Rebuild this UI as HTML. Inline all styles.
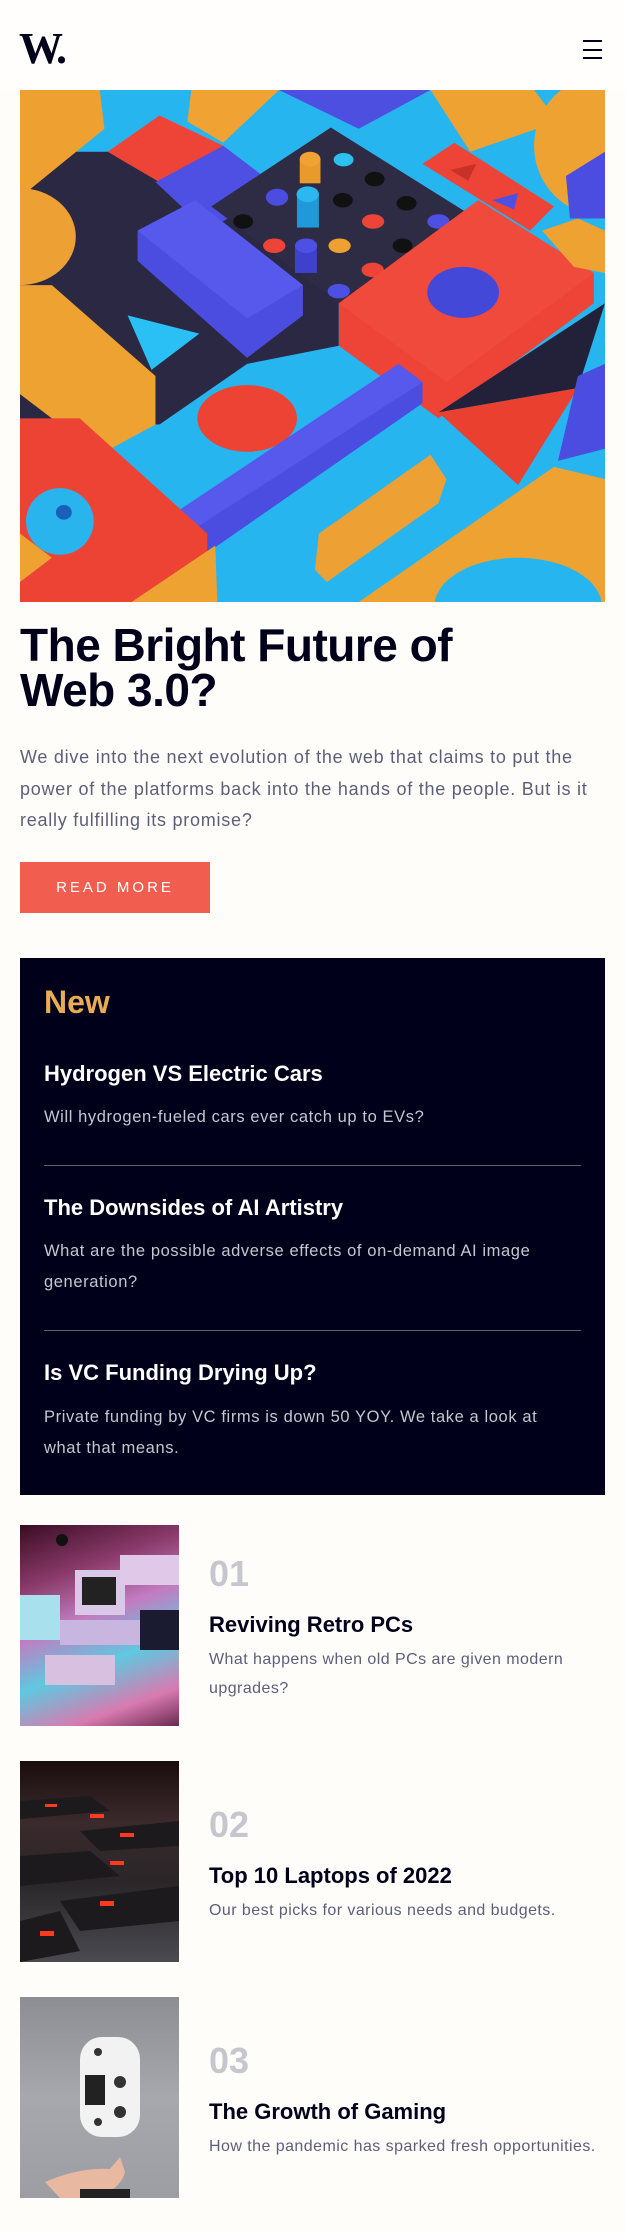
<!DOCTYPE html>
<html><head><meta charset="utf-8">
<style>
*{margin:0;padding:0;box-sizing:border-box}
html,body{width:625px;height:2233px;background:#fffdfa;overflow:hidden}
body{position:relative;font-family:"Liberation Sans",Arial,sans-serif}
.a{position:absolute;white-space:nowrap}
.hdr{position:absolute;left:0;top:0;width:625px;height:90px;background:#fffefc}
.logo{left:19px;top:27px;font-family:"Liberation Serif",serif;font-weight:bold;font-size:44px;line-height:44px;color:#00001a;letter-spacing:-3px}
.hb{position:absolute;left:583px;width:19px;height:2px;background:#00001a}
.title{left:20px;top:623px;font-size:46px;line-height:45px;font-weight:bold;color:#00001a;letter-spacing:-0.5px}
.para{left:20px;top:742px;font-size:18px;line-height:31.5px;color:#5d5f79;letter-spacing:0.75px}
.btn{position:absolute;left:20px;top:862px;width:190px;height:51px;background:#f15e50;color:#fff;font-size:15px;letter-spacing:3px;text-align:center;line-height:51px}
.panel{position:absolute;left:20px;top:958px;width:585px;height:537px;background:#00001a}
.new{left:44px;top:986px;font-size:32px;line-height:32px;font-weight:bold;color:#e9ab53}
.pt{left:44px;font-size:22px;line-height:26px;font-weight:bold;color:#fff}
.pd{left:44px;font-size:16.5px;line-height:31px;color:#c5c6ce;letter-spacing:0.6px}
.div{position:absolute;left:44px;width:537px;height:1px;background:#5d5f79}
.img{position:absolute;left:20px;width:159px;height:201px;overflow:hidden}
.num{left:209px;font-size:36px;line-height:36px;font-weight:bold;color:#c5c6ce}
.lt{left:209px;font-size:22px;line-height:26px;font-weight:bold;color:#00001a}
.ld{left:209px;font-size:16px;line-height:29px;color:#5d5f79;letter-spacing:0.45px}
</style></head><body>
<div class="hdr"></div>
<div class="a logo">W.</div>
<div class="hb" style="top:40px"></div>
<div class="hb" style="top:49px"></div>
<div class="hb" style="top:57px"></div>

<svg style="position:absolute;left:20px;top:90px" width="585" height="512" viewBox="50 148 1468 845" preserveAspectRatio="none">
<rect x="50" y="148" width="1468" height="845" fill="#27b5ef"/>
<polygon points="50,250 300,250 530,340 830,210 1170,350 850,500 850,570 620,600 400,700 50,700" fill="#2a2842"/>
<polygon points="50,148 250,148 262,212 60,320 50,320" fill="#eea030"/>
<polygon points="480,148 700,148 560,235 470,200" fill="#f0a233"/>
<polygon points="700,148 1080,148 900,212" fill="#4c4fe0"/>
<polygon points="270,250 400,190 560,240 400,300" fill="#ee4438"/>
<polygon points="390,300 560,240 700,310 520,380" fill="#4d50e2"/>
<ellipse cx="50" cy="390" rx="140" ry="80" fill="#eda033"/>
<polygon points="345,380 490,330 760,470 760,520 620,590 345,430" fill="#4a4de0"/>
<polygon points="345,380 490,330 760,470 620,525" fill="#5659ec"/>
<polygon points="530,340 830,210 1170,350 850,500" fill="#2e2c45"/>
<g fill="#111"><ellipse cx="610" cy="365" rx="25" ry="12"/><ellipse cx="860" cy="330" rx="25" ry="12"/><ellipse cx="940" cy="295" rx="25" ry="12"/><ellipse cx="1020" cy="335" rx="25" ry="12"/><ellipse cx="1010" cy="405" rx="25" ry="12"/></g>
<g><ellipse cx="695" cy="325" rx="28" ry="14" fill="#4a4de0"/><rect x="752" y="262" width="52" height="40" fill="#e89a2a"/><ellipse cx="778" cy="262" rx="26" ry="12" fill="#f0a233"/><rect x="745" y="320" width="55" height="55" fill="#1e9ad8"/><ellipse cx="772" cy="320" rx="28" ry="13" fill="#2bb8f0"/><ellipse cx="862" cy="263" rx="25" ry="11" fill="#2bc0f0"/><ellipse cx="688" cy="405" rx="28" ry="12" fill="#ee4438"/><rect x="740" y="405" width="55" height="45" fill="#3e41cc"/><ellipse cx="768" cy="405" rx="28" ry="12" fill="#4d50e2"/><ellipse cx="852" cy="405" rx="28" ry="12" fill="#eea030"/><ellipse cx="936" cy="365" rx="28" ry="12" fill="#ee4438"/><ellipse cx="935" cy="445" rx="28" ry="12" fill="#ee4438"/><ellipse cx="1100" cy="365" rx="28" ry="12" fill="#4d50e2"/><ellipse cx="850" cy="480" rx="28" ry="12" fill="#4d50e2"/></g>
<polygon points="50,470 130,470 390,620 390,700 250,750 50,650" fill="#eea232"/>
<polygon points="320,520 500,550 380,610" fill="#2ac0f5"/>
<polygon points="850,500 1200,330 1490,450 1490,500 1100,690 850,570" fill="#ee4438"/>
<polygon points="850,500 1200,330 1490,450 1120,630" fill="#f04a3c"/>
<ellipse cx="1162" cy="482" rx="90" ry="42" fill="#4448d8"/>
<polygon points="1060,270 1140,235 1390,340 1330,380" fill="#ee4438"/>
<polygon points="1130,280 1195,270 1175,298" fill="#c73226"/>
<polygon points="1235,330 1300,318 1290,345" fill="#4d50e2"/>
<polygon points="1080,148 1340,148 1400,200 1180,250" fill="#eea232"/>
<ellipse cx="1510" cy="240" rx="170" ry="115" fill="#eea232"/>
<polygon points="1420,290 1518,250 1518,360 1430,360" fill="#4a4de0"/>
<polygon points="1360,380 1450,360 1518,380 1518,450 1440,440" fill="#eea232"/>
<polygon points="1100,680 1518,500 1450,640" fill="#23213a"/>
<polygon points="1100,680 1450,640 1300,800" fill="#e9402f"/>
<polygon points="1400,760 1450,620 1518,600 1518,740" fill="#4a4de0"/>
<ellipse cx="620" cy="690" rx="125" ry="55" fill="#ec4335"/>
<polygon points="430,850 1000,600 1060,630 1060,665 480,930" fill="#4a4de0"/>
<polygon points="430,850 1000,600 1060,630 470,880" fill="#5659ec"/>
<polygon points="50,690 200,690 520,880 520,993 50,993" fill="#ec4335"/>
<polygon points="50,880 130,920 50,960" fill="#eea232"/>
<ellipse cx="150" cy="860" rx="85" ry="55" fill="#2ab4ee"/>
<ellipse cx="160" cy="845" rx="20" ry="12" fill="#1a5fb8"/>
<polygon points="330,993 540,900 545,993" fill="#eea232"/>
<polygon points="800,880 1080,750 1120,790 1100,830 820,960 790,940" fill="#eda033"/>
<polygon points="900,993 1390,770 1518,790 1518,993" fill="#eea232"/>
<ellipse cx="1300" cy="1000" rx="210" ry="80" fill="#27b5ef"/>
</svg>

<div class="a title">The Bright Future of<br>Web 3.0?</div>
<div class="a para">We dive into the next evolution of the web that claims to put the<br>power of the platforms back into the hands of the people. But is it<br>really fulfilling its promise?</div>
<div class="btn">READ MORE</div>

<div class="panel"></div>
<div class="a new">New</div>
<div class="a pt" style="top:1061px">Hydrogen VS Electric Cars</div>
<div class="a pd" style="top:1102px">Will hydrogen-fueled cars ever catch up to EVs?</div>
<div class="div" style="top:1165px"></div>
<div class="a pt" style="top:1195px">The Downsides of AI Artistry</div>
<div class="a pd" style="top:1236px">What are the possible adverse effects of on-demand AI image<br>generation?</div>
<div class="div" style="top:1330px"></div>
<div class="a pt" style="top:1360px">Is VC Funding Drying Up?</div>
<div class="a pd" style="top:1402px">Private funding by VC firms is down 50 YOY. We take a look at<br>what that means.</div>

<div class="img" style="top:1525px;background:linear-gradient(160deg,#3a0c22 0%,#8a3a6a 25%,#c27cc0 45%,#5fc8e0 65%,#d87ab0 85%,#6a2a50 100%)">
<svg width="159" height="201" viewBox="0 0 159 201"><rect x="55" y="45" width="50" height="45" fill="#d9c8e8"/><rect x="62" y="52" width="34" height="28" fill="#222"/><rect x="40" y="95" width="80" height="25" fill="#c8b5e0"/><rect x="0" y="70" width="40" height="45" fill="#a8e0ee"/><rect x="25" y="130" width="70" height="30" fill="#d8c0e0"/><circle cx="42" cy="15" r="6" fill="#111"/><rect x="100" y="30" width="59" height="30" fill="#e0c8e8"/><rect x="120" y="85" width="39" height="40" fill="#1a1a30"/></svg>
</div>
<div class="a num" style="top:1556px">01</div>
<div class="a lt" style="top:1612px">Reviving Retro PCs</div>
<div class="a ld" style="top:1645px">What happens when old PCs are given modern<br>upgrades?</div>

<div class="img" style="top:1761px;background:linear-gradient(180deg,#1a0c0c 0%,#3a2a2c 30%,#2a2628 60%,#4a4a50 100%)">
<svg width="159" height="201" viewBox="0 0 159 201"><g fill="#1c1a1c"><polygon points="0,40 70,35 90,50 0,58"/><polygon points="60,70 159,60 159,85 80,90"/><polygon points="0,95 70,90 100,115 0,125"/><polygon points="40,140 159,125 159,160 60,170"/><polygon points="0,160 40,150 60,190 0,201"/></g><g fill="#ff3a20"><rect x="25" y="43" width="12" height="3"/><rect x="70" y="53" width="14" height="4"/><rect x="100" y="72" width="14" height="4"/><rect x="90" y="100" width="14" height="4"/><rect x="80" y="140" width="14" height="5"/><rect x="20" y="170" width="14" height="5"/></g></svg>
</div>
<div class="a num" style="top:1807px">02</div>
<div class="a lt" style="top:1863px">Top 10 Laptops of 2022</div>
<div class="a ld" style="top:1896px">Our best picks for various needs and budgets.</div>

<div class="img" style="top:1997px;background:linear-gradient(180deg,#8c8e94 0%,#a6a8ae 50%,#9c9ea4 100%)">
<svg width="159" height="201" viewBox="0 0 159 201"><rect x="60" y="40" width="60" height="100" rx="22" fill="#f2f2f2"/><rect x="65" y="78" width="20" height="30" fill="#222"/><circle cx="78" cy="55" r="4" fill="#333"/><circle cx="100" cy="85" r="6" fill="#333"/><circle cx="100" cy="115" r="6" fill="#333"/><circle cx="78" cy="125" r="4" fill="#333"/><path d="M25 185 Q60 170 90 172 L100 160 L105 175 Q100 195 70 201 L40 201 Z" fill="#e8b8a0"/><rect x="60" y="192" width="50" height="9" fill="#222"/></svg>
</div>
<div class="a num" style="top:2043px">03</div>
<div class="a lt" style="top:2099px">The Growth of Gaming</div>
<div class="a ld" style="top:2132px">How the pandemic has sparked fresh opportunities.</div>
</body></html>
